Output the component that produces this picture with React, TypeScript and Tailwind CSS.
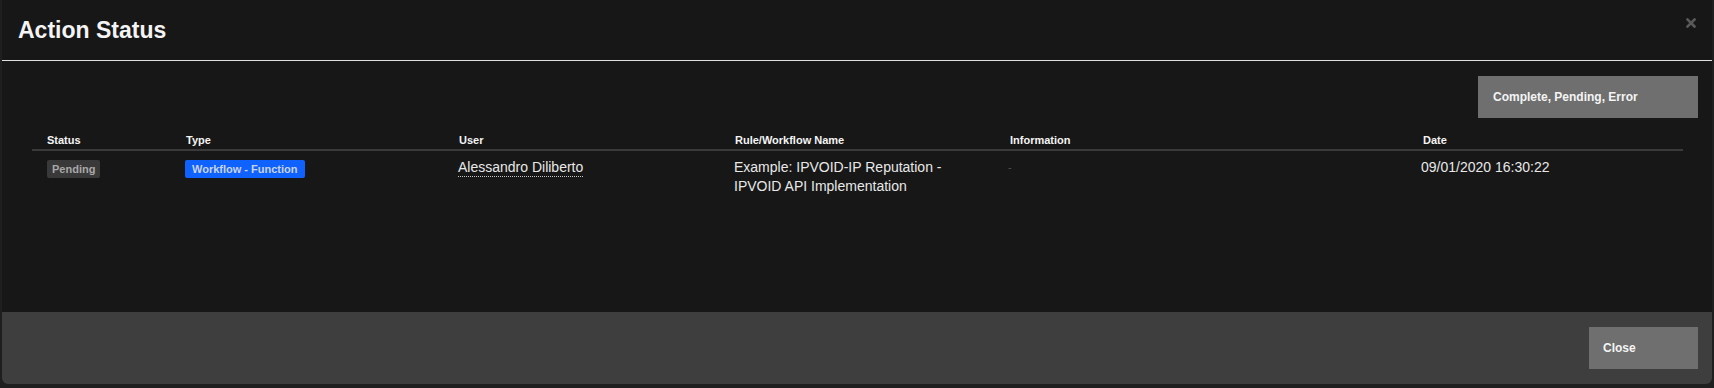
const columns = ['Status', 'Type', 'User', 'Rule/Workflow Name', 'Information', 'Date'];

const font = { fontFamily: '"Liberation Sans", Arial, sans-serif' };

function CloseIcon() {
  return (
    <svg width="10" height="10" viewBox="0 0 10 10" className="block">
      <path d="M1.5 1.5 L8.5 8.5 M8.5 1.5 L1.5 8.5" stroke="#595959" strokeWidth="2.6" strokeLinecap="square" />
    </svg>
  );
}

export default function App() {
  return (
    <div className="h-[388px] w-[1714px] overflow-hidden bg-[#1f1f1f] px-[2px]" style={font}>
      <div className="relative flex h-[384px] flex-col overflow-hidden rounded-b-[6px] bg-[#171717]">
        {/* header */}
        <div className="flex h-[61px] items-center border-b border-[#e0e0e0] pl-[16px]">
          <h1 className="pt-[1px] text-[23px] font-bold leading-none text-[#f4f4f4]">Action Status</h1>
        </div>
        <button className="absolute right-[15px] top-[17px] p-[1px]">
          <CloseIcon />
        </button>

        {/* body */}
        <div className="flex-1">
          <div className="mt-[15px] flex justify-end pr-[14px]">
            <button className="h-[42px] w-[220px] bg-[#6f6f6f] pl-[15px] text-left text-[12px] font-bold text-[#f4f4f4]">
              Complete, Pending, Error
            </button>
          </div>

          <div className="ml-[30px] mr-[29px] mt-[14px]">
            <div className="grid h-[19px] grid-cols-[139px_273px_276px_275px_413px_1fr] items-center border-b-2 border-[#3a3a3a] pb-[1px]">
              {columns.map((c) => (
                <div key={c} className="pl-[15px] text-[11px] font-bold text-[#f4f4f4]">
                  {c}
                </div>
              ))}
            </div>
            <div className="grid grid-cols-[139px_273px_276px_275px_413px_1fr] items-start pt-[7px] text-[14px] leading-[19px] text-[#e8e8e8]">
              <div className="pl-[15px] pt-[1px]">
                <span className="inline-block h-[18px] rounded-[2px] bg-[#393939] px-[5px] text-[11px] font-bold leading-[18px] text-[#a8a8a8]">
                  Pending
                </span>
              </div>
              <div className="pl-[14px] pt-[1px]">
                <span className="inline-block h-[18px] rounded-[2px] bg-[#0f62fe] px-[7px] text-[11px] font-bold leading-[18px] text-[#c9d3e6]">
                  Workflow - Function
                </span>
              </div>
              <div className="pl-[14px]">
                <span className="border-b border-dotted border-[#c6c6c6] pb-[1px]">Alessandro Diliberto</span>
              </div>
              <div className="pl-[14px] pr-[20px]">
                Example: IPVOID-IP Reputation -<br />
                IPVOID API Implementation
              </div>
              <div className="pl-[13px] text-[11px] text-[#525252]">-</div>
              <div className="pl-[13px]">09/01/2020 16:30:22</div>
            </div>
          </div>
        </div>

        {/* footer */}
        <div className="flex h-[72px] items-start justify-end bg-[#3e3e3e] pr-[14px] pt-[15px]">
          <button className="h-[42px] w-[109px] bg-[#6f6f6f] pl-[14px] text-left text-[12px] font-bold text-[#f4f4f4]">
            Close
          </button>
        </div>
      </div>
    </div>
  );
}
